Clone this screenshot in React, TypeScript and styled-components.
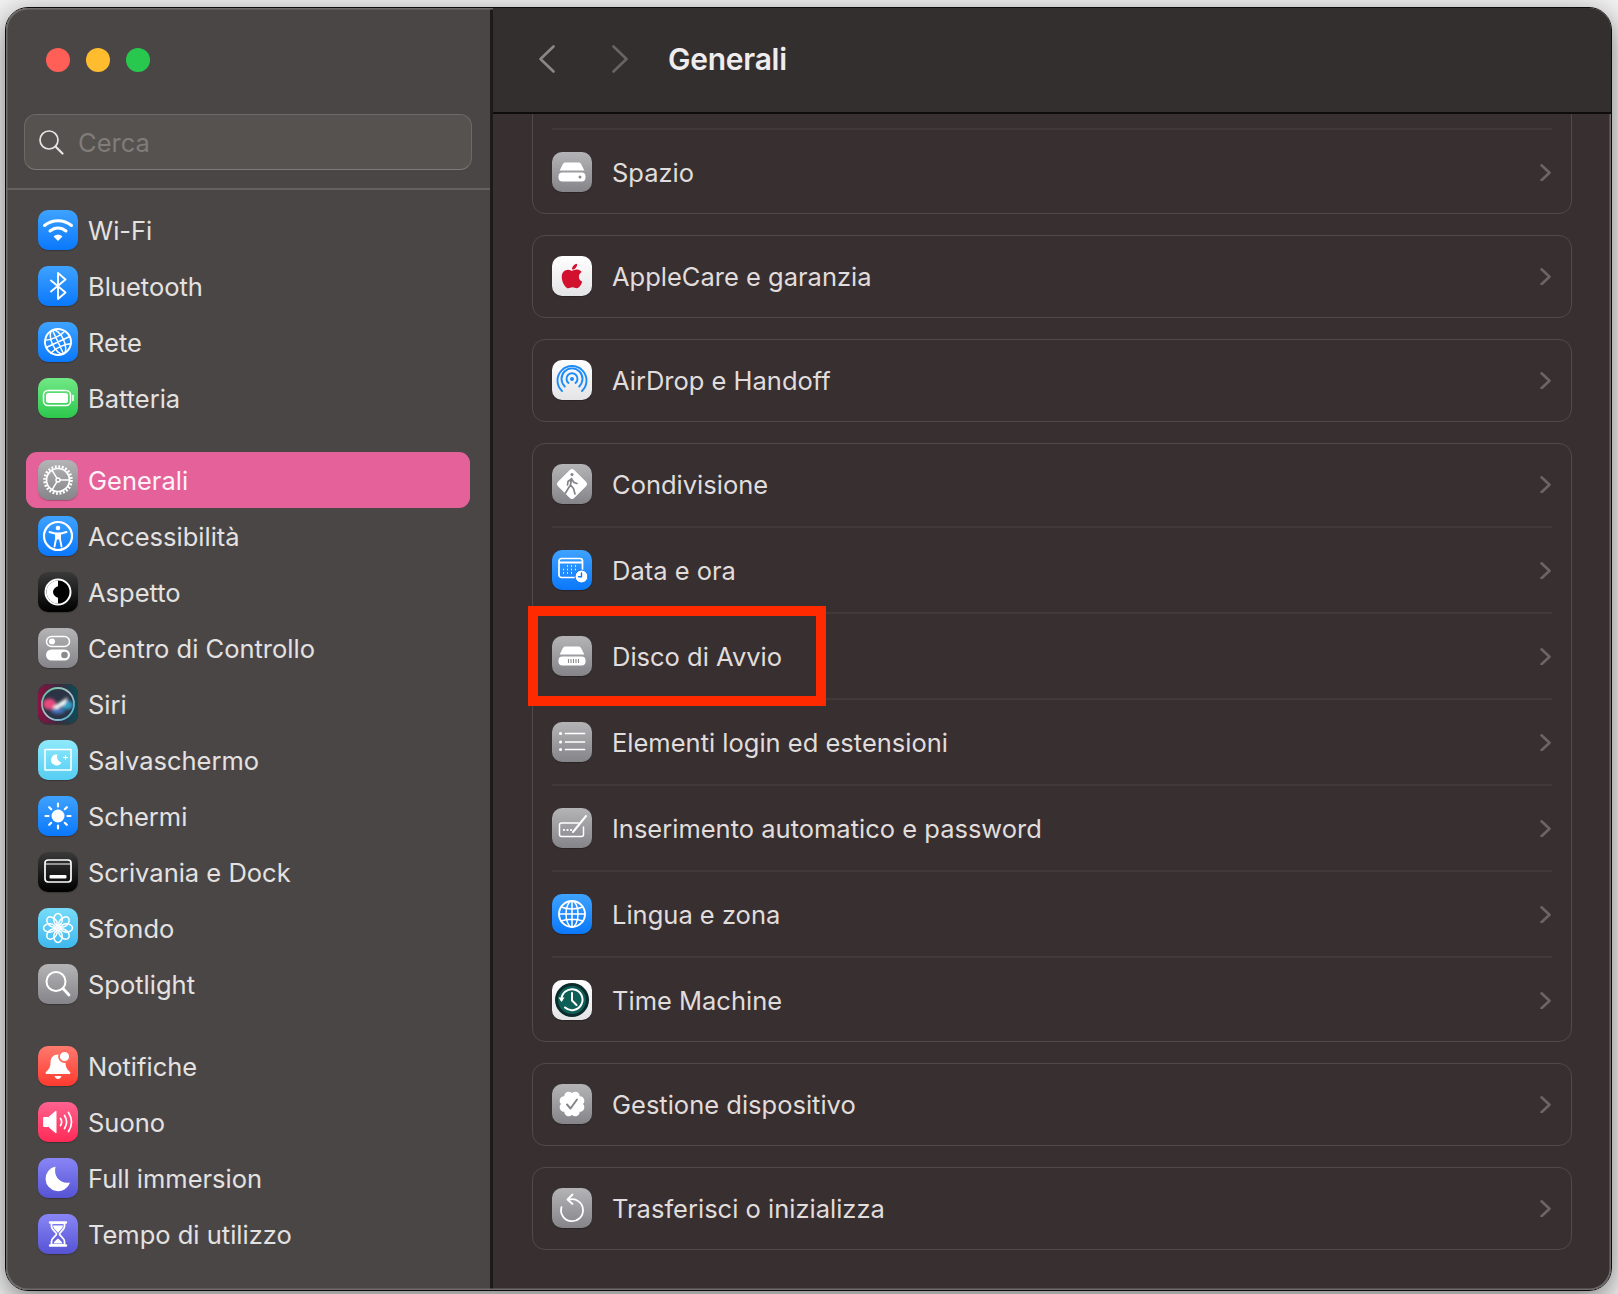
import React from "react";
import styled, { createGlobalStyle } from "styled-components";
import { FaApple } from "react-icons/fa";

const GlobalStyle = createGlobalStyle`
    html, body {
        margin: 0;
        padding: 0;
        background: #f3f3f3;
    }
    body {
        width: 1618px;
        height: 1294px;
        overflow: hidden;
        font-family: Inter, "Liberation Sans", sans-serif;
    }
`;

const Window = styled.div`
    position: relative;
    box-sizing: border-box;
    width: 1607px;
    height: 1284px;
    margin: 7px 0 0 5px;
    border: 1px solid #0d0b0b;
    border-radius: 23px;
    display: flex;
    overflow: hidden;
    box-shadow: 0 8px 30px rgba(0, 0, 0, 0.5);

    &::after {
        content: "";
        position: absolute;
        inset: 0;
        border-radius: 22px;
        box-shadow: inset 0 0 0 1.5px #6f6b6a;
        pointer-events: none;
    }
`;

const Sidebar = styled.aside`
    box-sizing: border-box;
    width: 484px;
    flex: none;
    background: #4a4645;
    display: flex;
    flex-direction: column;
`;

const TrafficLights = styled.div`
    display: flex;
    gap: 16px;
    padding: 40px 0 0 40px;
`;

const Light = styled.span<{ $color: string }>`
    width: 24px;
    height: 24px;
    border-radius: 50%;
    background: ${(p) => p.$color};
`;

const SearchBox = styled.div`
    box-sizing: border-box;
    height: 56px;
    margin: 42px 18px 0;
    padding: 0 0 0 13px;
    display: flex;
    align-items: center;
    gap: 14px;
    background: #565250;
    border: 1.5px solid #6c6967;
    border-bottom-color: #7d7a78;
    border-radius: 12px;
`;

const SearchLabel = styled.span`
    font-size: 25.5px;
    color: #7f7c7a;
`;

const SidebarRule = styled.div`
    height: 2px;
    margin-top: 18px;
    background: #656160;
`;

const SidebarList = styled.nav`
    padding: 12px 20px 0;
    display: flex;
    flex-direction: column;
    gap: 26px;
`;

const SidebarGroup = styled.div`
    display: flex;
    flex-direction: column;
`;

const SidebarRow = styled.div<{ $active?: boolean }>`
    height: 56px;
    box-sizing: border-box;
    padding-left: 12px;
    display: flex;
    align-items: center;
    gap: 10px;
    border-radius: 11px;
    background: ${(p) => (p.$active ? "#e5619a" : "transparent")};
    color: ${(p) => (p.$active ? "#fdf3f7" : "#e4e2e1")};
`;

const RowLabel = styled.span`
    font-size: 25.5px;
    white-space: nowrap;
`;

const Tile = styled.div<{ $from: string; $to: string }>`
    width: 40px;
    height: 40px;
    flex: none;
    border-radius: 10px;
    background: linear-gradient(180deg, ${(p) => p.$from}, ${(p) => p.$to});
    box-shadow: 0 1px 1px rgba(0, 0, 0, 0.25);
    display: flex;
    align-items: center;
    justify-content: center;
    overflow: hidden;

    svg {
        display: block;
    }
`;

const Splitter = styled.div`
    width: 3px;
    flex: none;
    background: #1f1a1a;
`;

const Panel = styled.main`
    flex: 1;
    min-width: 0;
    display: flex;
    flex-direction: column;
    background: #382f30;
`;

const Toolbar = styled.header`
    box-sizing: border-box;
    height: 106px;
    flex: none;
    position: relative;
    z-index: 1;
    background: #342f2f;
    border-bottom: 2px solid #0e0c0c;
    display: flex;
    align-items: center;
    padding: 0 0 2px 46px;
`;

const NavButton = styled.svg<{ $dim?: boolean }>`
    width: 16px;
    height: 28px;
    margin-right: ${(p) => (p.$dim ? "40px" : "57px")};
    fill: none;
    stroke: ${(p) => (p.$dim ? "#686462" : "#8b8785")};
    stroke-width: 2.6;
    stroke-linecap: round;
    stroke-linejoin: round;
`;

const Title = styled.h1`
    margin: 0;
    font-size: 30px;
    font-weight: 600;
    letter-spacing: -0.26px;
    color: #eeeced;
`;

const Scroller = styled.div`
    flex: 1;
    min-height: 0;
    overflow: hidden;
    display: flex;
    flex-direction: column;
    justify-content: flex-end;
    gap: 20.5px;
    padding: 0 39px 40px 39px;
`;

const Card = styled.section`
    flex: none;
    border: 1px solid #504a4a;
    border-radius: 13px;
`;

const SettingRow = styled.div`
    height: 81.5px;
    padding: 0 20px 0 19px;
    display: flex;
    align-items: center;
    gap: 20px;
    color: #e0dddc;
`;

const Chevron = styled.svg`
    width: 11px;
    height: 18px;
    margin-left: auto;
    fill: none;
    stroke: #6b6665;
    stroke-width: 2.6;
    stroke-linecap: round;
    stroke-linejoin: round;
`;

const RowRule = styled.div`
    height: 2px;
    margin: 1.25px 19px;
    background: #413a3a;
`;

const Highlight = styled.div`
    position: absolute;
    left: 522px;
    top: 598px;
    width: 298px;
    height: 100px;
    box-sizing: border-box;
    border: 10px solid #ff2a00;
`;

const Glyph: React.FC<{ children: React.ReactNode }> = ({ children }) => (
    <svg width="40" height="40" viewBox="0 0 40 40" fill="none" stroke="#fff" strokeLinecap="round" strokeLinejoin="round">
        {children}
    </svg>
);

const blue = { $from: "#3ea2ff", $to: "#0a78fb" };
const gray = { $from: "#b4b3b6", $to: "#858488" };
const dark = { $from: "#3a3a3a", $to: "#000000" };
const cyan = { $from: "#8fe9fb", $to: "#55cdf3" };
const indigo = { $from: "#8886f6", $to: "#5653d4" };
const paper = { $from: "#ffffff", $to: "#e4e4e6" };

const GlobeLines = ({ tilt }: { tilt: number }) => (
    <g transform={`rotate(${tilt} 20 20)`} strokeWidth="1.5">
        <circle cx="20" cy="20" r="13" strokeWidth="1.9" />
        <ellipse cx="20" cy="20" rx="6" ry="13" />
        <path d="M20 7v26M7 20h26M9 13c6 2.5 16 2.5 22 0M9 27c6-2.5 16-2.5 22 0" />
    </g>
);

const DiskTop = () => <path d="M13.5 10.5h13c1.2 0 2 .5 2.6 1.6l3.2 6.4H7.700l3.200-6.400c.6-1.100 1.400-1.600 2.600-1.600z" fill="#fff" stroke="none" />;

const icons: Record<string, React.ReactNode> = {
    wifi: (
        <Tile {...blue}>
            <Glyph>
                <g strokeWidth="3">
                    <path d="M6.500 15.500c7.500-6.500 19.500-6.500 27 0" />
                    <path d="M12 21c4.800-4 11.200-4 16 0" />
                </g>
                <path d="M16.500 26.500c2-1.600 5-1.600 7 0L20 30z" fill="#fff" stroke="#fff" strokeWidth="1.400" />
            </Glyph>
        </Tile>
    ),
    bluetooth: (
        <Tile {...blue}>
            <Glyph>
                <path d="M13 14.500 27.500 26.500 20 33V7l7.500 6.500L13 25.500" strokeWidth="1.900" />
            </Glyph>
        </Tile>
    ),
    globe: (
        <Tile {...blue}>
            <Glyph>
                <GlobeLines tilt={-25} />
            </Glyph>
        </Tile>
    ),
    battery: (
        <Tile $from="#72e885" $to="#2cc84d">
            <Glyph>
                <rect x="5.500" y="12.500" width="27" height="15" rx="4.500" strokeWidth="1.500" />
                <rect x="8" y="15" width="22" height="10" rx="2.500" fill="#fff" stroke="none" />
                <path d="M35 17.500v5" strokeWidth="1.600" />
            </Glyph>
        </Tile>
    ),
    gear: (
        <Tile {...gray}>
            <Glyph>
                <circle cx="20" cy="20" r="13.500" strokeWidth="2.600" strokeDasharray="1.900 1.630" strokeLinecap="butt" />
                <circle cx="20" cy="20" r="11.500" strokeWidth="1.700" />
                <circle cx="20" cy="20" r="2" strokeWidth="1.500" />
                <path d="M22 20h9.500M19 18.300l-5-8.200M19 21.700l-5 8.200" strokeWidth="1.500" />
            </Glyph>
        </Tile>
    ),
    access: (
        <Tile {...blue}>
            <Glyph>
                <circle cx="20" cy="20" r="14" strokeWidth="2.200" />
                <circle cx="20" cy="12" r="2.300" fill="#fff" stroke="none" />
                <path d="M11.500 16 17 17.500h6L28.500 16" strokeWidth="1.900" />
                <path d="M18 17.500v5.500l-1.500 7.500M22 17.500v5.500l1.500 7.500" strokeWidth="1.900" />
                <path d="M18 17.500h4v6h-4z" fill="#fff" stroke="none" />
            </Glyph>
        </Tile>
    ),
    appearance: (
        <Tile {...dark}>
            <Glyph>
                <circle cx="20" cy="20" r="12.500" strokeWidth="2" fill="#000" />
                <path d="M20 8.500a11.500 11.500 0 0 0 0 23z" fill="#fff" stroke="none" />
                <path d="M20.500 14c-3.500 1-5.500 3.500-5.500 6s2 5 5.500 6c3-2 3-10 0-12z" fill="#000" stroke="none" />
            </Glyph>
        </Tile>
    ),
    control: (
        <Tile {...gray}>
            <Glyph>
                <rect x="8.500" y="8.500" width="23" height="10" rx="5" strokeWidth="1.500" />
                <circle cx="14" cy="13.500" r="3" fill="#fff" stroke="none" />
                <rect x="8" y="21.500" width="24" height="11" rx="5.500" fill="#fff" stroke="none" />
                <circle cx="26.500" cy="27" r="3.300" fill="#8a898d" stroke="none" />
            </Glyph>
        </Tile>
    ),
    siri: (
        <Tile $from="#0e2a2e" $to="#1a1f33">
            <svg width="40" height="40" viewBox="0 0 40 40">
                <defs>
                    <linearGradient id="siriBack" x1="0" y1="0" x2="1" y2="0">
                        <stop offset="0%" stopColor="#8a1243" />
                        <stop offset="50%" stopColor="#3b2a3e" />
                        <stop offset="100%" stopColor="#0b4d56" />
                    </linearGradient>
                    <linearGradient id="siriRing" x1="0" y1="0" x2="1" y2="1">
                        <stop offset="0%" stopColor="#4fc79a" />
                        <stop offset="50%" stopColor="#b8c0cc" />
                        <stop offset="100%" stopColor="#3fb4d6" />
                    </linearGradient>
                    <filter id="siriSoft" x="-30%" y="-30%" width="160%" height="160%">
                        <feGaussianBlur stdDeviation="1.400" />
                    </filter>
                </defs>
                <rect width="40" height="40" fill="url(#siriBack)" />
                <circle cx="20" cy="20" r="16" fill="#2b3444" stroke="url(#siriRing)" strokeWidth="1.800" />
                <g filter="url(#siriSoft)">
                    <ellipse cx="11.500" cy="20" rx="6.500" ry="5.500" fill="#e8487f" />
                    <ellipse cx="29" cy="21" rx="6" ry="4.500" fill="#2f9cc4" />
                    <ellipse cx="20" cy="27" rx="7" ry="3" fill="#3f6fb8" />
                    <path d="M14 24 24 17l6-4-3 7-8 5z" fill="#fff" />
                </g>
            </svg>
        </Tile>
    ),
    saver: (
        <Tile {...cyan}>
            <Glyph>
                <rect x="7" y="9.500" width="26" height="20.500" strokeWidth="1.500" strokeLinecap="butt" />
                <path d="M19.500 14.500a5.500 5.500 0 1 0 4 8 6 6 0 0 1-4-8z" fill="#fff" stroke="none" />
                <path d="M27.500 15.500v4M25.500 17.500h4" strokeWidth="1.100" />
            </Glyph>
        </Tile>
    ),
    display: (
        <Tile {...blue}>
            <Glyph>
                <circle cx="20" cy="20" r="6.500" fill="#fff" stroke="none" />
                <path d="M20 7.500v3M20 29.500v3M7.500 20h3M29.500 20h3M11.200 11.200l2 2M26.800 26.800l2 2M11.200 28.800l2-2M26.800 13.200l2-2" strokeWidth="2.200" />
            </Glyph>
        </Tile>
    ),
    dock: (
        <Tile {...dark}>
            <Glyph>
                <rect x="7" y="8" width="26" height="22" rx="3" strokeWidth="1.700" />
                <path d="M8 12h24" strokeWidth="1.200" />
                <rect x="11.500" y="23" width="17" height="3.500" rx="1" fill="#fff" stroke="none" />
            </Glyph>
        </Tile>
    ),
    wallpaper: (
        <Tile $from="#77dcf9" $to="#3fb8ed">
            <Glyph>
                {[0, 45, 90, 135, 180, 225, 270, 315].map((a) => (
                    <ellipse key={a} cx="20" cy="11.500" rx="4.200" ry="6" strokeWidth="1.500" transform={`rotate(${a} 20 20)`} />
                ))}
                <circle cx="20" cy="20" r="2" fill="#fff" stroke="none" />
            </Glyph>
        </Tile>
    ),
    spotlight: (
        <Tile {...gray}>
            <Glyph>
                <circle cx="18" cy="17.500" r="9.500" strokeWidth="2" />
                <path d="M25 24.500 31 31" strokeWidth="2.800" />
            </Glyph>
        </Tile>
    ),
    bell: (
        <Tile $from="#ff7a6e" $to="#ff3a2f">
            <Glyph>
                <path d="M20 8.500c-4.500 0-7.500 3.200-7.500 8 0 5-2 7-4.500 9.500-.8.800-.5 2 .7 2h22.600c1.200 0 1.500-1.200.7-2-2.500-2.500-4.500-4.500-4.500-9.500 0-4.800-3-8-7.500-8z" fill="#fff" stroke="none" />
                <path d="M16.500 30h7c-.6 2-2 3-3.500 3s-2.900-1-3.500-3z" fill="#fff" stroke="none" />
                <circle cx="26.500" cy="10.500" r="5.500" fill="#fff" stroke="#ff6a5e" strokeWidth="1.800" />
            </Glyph>
        </Tile>
    ),
    sound: (
        <Tile $from="#ff6290" $to="#ff2a56">
            <Glyph>
                <path d="M6 15.500h4.500L18 9v22l-7.500-6.500H6z" fill="#fff" stroke="#fff" strokeWidth="1" />
                <path d="M22.500 16.500c1.500 2.300 1.500 4.700 0 7M26.500 13.500c2.800 4.300 2.800 8.700 0 13M30.500 10.500c4 6.300 4 12.700 0 19" strokeWidth="1.700" />
            </Glyph>
        </Tile>
    ),
    moon: (
        <Tile {...indigo}>
            <Glyph>
                <path d="M17.500 8.500a12.500 12.500 0 1 0 14.500 16c-9 2-17-5.500-14.500-16z" fill="#fff" stroke="none" />
            </Glyph>
        </Tile>
    ),
    hourglass: (
        <Tile {...indigo}>
            <Glyph>
                <path d="M12 8.500h16M12 31.500h16" strokeWidth="2.400" />
                <path d="M13.500 9v3.500c0 3.500 5 5.500 5 7.500s-5 4-5 7.500V31h13v-3.500c0-3.500-5-5.500-5-7.500s5-4 5-7.500V9z" strokeWidth="1.800" />
                <path d="M15 11.500h10c0 3-3.500 5-5 7.500-1.500-2.500-5-4.500-5-7.500zM15.500 29.500c.5-2.500 3-3.500 4.500-5 1.500 1.500 4 2.500 4.500 5z" fill="#fff" stroke="none" />
            </Glyph>
        </Tile>
    ),
    storage: (
        <Tile {...gray}>
            <Glyph>
                <DiskTop />
                <rect x="6.500" y="20.500" width="27" height="9" rx="4" fill="#fff" stroke="none" />
                <circle cx="28" cy="25" r="1.500" fill="#8a898d" stroke="none" />
            </Glyph>
        </Tile>
    ),
    apple: (
        <Tile {...paper}>
            <FaApple size={28} color="#d2112e" />
        </Tile>
    ),
    airdrop: (
        <Tile {...paper}>
            <svg width="40" height="40" viewBox="0 0 40 40" fill="none" stroke="#1d8cf8" strokeLinecap="round">
                <circle cx="20" cy="19" r="2" fill="#1d8cf8" stroke="none" />
                <path d="M16.500 23a5.500 5.500 0 1 1 7 0M12.800 26.500a10.500 10.500 0 1 1 14.400 0M10 31a14.500 14.500 0 1 1 20 0" strokeWidth="1.900" />
            </svg>
        </Tile>
    ),
    sharing: (
        <Tile {...gray}>
            <Glyph>
                <rect x="8.500" y="8.500" width="23" height="23" rx="3.500" transform="rotate(45 20 20)" fill="#fff" stroke="none" />
                <g stroke="#838286">
                    <circle cx="20" cy="10.500" r="1.500" fill="#838286" stroke="none" />
                    <path d="M19.500 14.500 18.500 21l3 3.500 1.500 5.500M18.500 21l-2 3-3 5M19.500 15l-3.500 2.500-.5 3.500M19.500 15l2.500 3.500 3 1" strokeWidth="1.700" />
                </g>
            </Glyph>
        </Tile>
    ),
    calendar: (
        <Tile {...blue}>
            <Glyph>
                <path d="M26 27.500H9.500a2.500 2.500 0 0 1-2.500-2.500V11a2.500 2.500 0 0 1 2.500-2.500h18.500a2.500 2.500 0 0 1 2.500 2.500v9" strokeWidth="1.700" />
                <path d="M8 12.500h22" strokeWidth="2" />
                <path d="M15 16h1M19 16h1M23 16h1M11 19.500h1M15 19.500h1M19 19.500h1M23 19.500h1M11 23h1M15 23h1M19 23h1" strokeWidth="1.700" strokeLinecap="butt" />
                <circle cx="29.500" cy="26.500" r="6.500" fill="#fff" stroke="#0a78fb" strokeWidth="1" />
                <path d="M29.500 23v3.800h-3" stroke="#0a78fb" strokeWidth="1.400" />
            </Glyph>
        </Tile>
    ),
    startup: (
        <Tile {...gray}>
            <Glyph>
                <DiskTop />
                <rect x="6.500" y="20.500" width="27" height="9" rx="4" fill="#fff" stroke="none" />
                <path d="M16.500 23v4M19 23v4M21.500 23v4M24 23v4M26.500 23v4" stroke="#8a898d" strokeWidth="1.100" strokeLinecap="butt" />
            </Glyph>
        </Tile>
    ),
    list: (
        <Tile {...gray}>
            <Glyph>
                <path d="M13.500 11.500h19M13.500 20h19M13.500 27.500h19" strokeWidth="1.700" />
                <path d="M8.500 11.500h.1M8.500 20h.1M8.500 27.500h.1" strokeWidth="3" />
            </Glyph>
        </Tile>
    ),
    keyboard: (
        <Tile {...gray}>
            <Glyph>
                <path d="M26.500 15H9.500a2 2 0 0 0-2 2v9.500a2 2 0 0 0 2 2h20a2 2 0 0 0 2-2V19" strokeWidth="1.500" />
                <path d="M12 22h.1M15.500 22h.1M19 22h.1" strokeWidth="2.200" />
                <path d="M21 24 34 8" strokeWidth="2" />
            </Glyph>
        </Tile>
    ),
    language: (
        <Tile {...blue}>
            <Glyph>
                <GlobeLines tilt={0} />
            </Glyph>
        </Tile>
    ),
    timemachine: (
        <Tile {...paper}>
            <svg width="40" height="40" viewBox="0 0 40 40" fill="none" stroke="#fff" strokeLinecap="round" strokeLinejoin="round">
                <circle cx="20" cy="20" r="17" fill="#0b2b2c" stroke="none" />
                <circle cx="20" cy="20" r="14" fill="#0e5f57" stroke="none" />
                <path d="M9.500 20A10.500 10.500 0 1 1 13 27.500" strokeWidth="2" />
                <path d="M6.500 17.500h6l-3 4.500z" fill="#fff" stroke="none" />
                <path d="M20 13v7.500l4.500 4.500" strokeWidth="2" />
            </svg>
        </Tile>
    ),
    device: (
        <Tile {...gray}>
            <Glyph>
                <g fill="#fff" stroke="none">
                    <circle cx="20" cy="20" r="10.500" />
                    {[0, 45, 90, 135, 180, 225, 270, 315].map((a) => (
                        <circle key={a} cx="20" cy="11.500" r="4.500" transform={`rotate(${a + 22.500} 20 20)`} />
                    ))}
                </g>
                <path d="M15 20.500l3.500 4 6.500-9" stroke="#838286" strokeWidth="1.900" />
            </Glyph>
        </Tile>
    ),
    reset: (
        <Tile {...gray}>
            <Glyph>
                <path d="M17.500 11.500A11 11 0 1 1 9.500 19" strokeWidth="1.800" />
                <path d="M20.500 6.500 15.500 11.500 20.500 16" strokeWidth="1.800" />
            </Glyph>
        </Tile>
    ),
};

const searchIcon = (
    <svg width="26" height="26" viewBox="0 0 26 26" fill="none" stroke="#e8e6e5" strokeLinecap="round">
        <circle cx="11" cy="11" r="9" strokeWidth="1.700" />
        <path d="M17.500 17.500 24.500 24.500" strokeWidth="2.200" />
    </svg>
);

const sidebarGroups = [
    [
        { icon: "wifi", label: "Wi-Fi" },
        { icon: "bluetooth", label: "Bluetooth" },
        { icon: "globe", label: "Rete" },
        { icon: "battery", label: "Batteria" },
    ],
    [
        { icon: "gear", label: "Generali", active: true },
        { icon: "access", label: "Accessibilità" },
        { icon: "appearance", label: "Aspetto" },
        { icon: "control", label: "Centro di Controllo" },
        { icon: "siri", label: "Siri" },
        { icon: "saver", label: "Salvaschermo" },
        { icon: "display", label: "Schermi" },
        { icon: "dock", label: "Scrivania e Dock" },
        { icon: "wallpaper", label: "Sfondo" },
        { icon: "spotlight", label: "Spotlight" },
    ],
    [
        { icon: "bell", label: "Notifiche" },
        { icon: "sound", label: "Suono" },
        { icon: "moon", label: "Full immersion" },
        { icon: "hourglass", label: "Tempo di utilizzo" },
    ],
];

const cards = [
    [
        { icon: "", label: "" },
        { icon: "storage", label: "Spazio" },
    ],
    [{ icon: "apple", label: "AppleCare e garanzia" }],
    [{ icon: "airdrop", label: "AirDrop e Handoff" }],
    [
        { icon: "sharing", label: "Condivisione" },
        { icon: "calendar", label: "Data e ora" },
        { icon: "startup", label: "Disco di Avvio" },
        { icon: "list", label: "Elementi login ed estensioni" },
        { icon: "keyboard", label: "Inserimento automatico e password" },
        { icon: "language", label: "Lingua e zona" },
        { icon: "timemachine", label: "Time Machine" },
    ],
    [{ icon: "device", label: "Gestione dispositivo" }],
    [{ icon: "reset", label: "Trasferisci o inizializza" }],
];

export default function App() {
    return (
        <>
            <GlobalStyle />
            <Window>
                <Sidebar>
                    <TrafficLights>
                        <Light $color="#ff5f57" />
                        <Light $color="#febc2e" />
                        <Light $color="#28c84f" />
                    </TrafficLights>
                    <SearchBox>
                        {searchIcon}
                        <SearchLabel>Cerca</SearchLabel>
                    </SearchBox>
                    <SidebarRule />
                    <SidebarList>
                        {sidebarGroups.map((group, i) => (
                            <SidebarGroup key={i}>
                                {group.map((item) => (
                                    <SidebarRow key={item.label} $active={"active" in item}>
                                        {icons[item.icon]}
                                        <RowLabel>{item.label}</RowLabel>
                                    </SidebarRow>
                                ))}
                            </SidebarGroup>
                        ))}
                    </SidebarList>
                </Sidebar>
                <Splitter />
                <Panel>
                    <Toolbar>
                        <NavButton viewBox="0 0 16 28">
                            <path d="M14.500 1.500 1.500 14l13 12.500" />
                        </NavButton>
                        <NavButton viewBox="0 0 16 28" $dim>
                            <path d="M1.500 1.500 14.500 14l-13 12.500" />
                        </NavButton>
                        <Title>Generali</Title>
                    </Toolbar>
                    <Scroller>
                        {cards.map((rows, i) => (
                            <Card key={i}>
                                {rows.map((row, j) => (
                                    <React.Fragment key={row.label}>
                                        {j > 0 && <RowRule />}
                                        <SettingRow>
                                            {row.label && icons[row.icon]}
                                            {row.label && <RowLabel>{row.label}</RowLabel>}
                                            {row.label && (
                                                <Chevron viewBox="0 0 11 18">
                                                    <path d="M1.500 2.300 9.500 9.800l-8 7.500" />
                                                </Chevron>
                                            )}
                                        </SettingRow>
                                    </React.Fragment>
                                ))}
                            </Card>
                        ))}
                    </Scroller>
                </Panel>
                <Highlight />
            </Window>
        </>
    );
}
